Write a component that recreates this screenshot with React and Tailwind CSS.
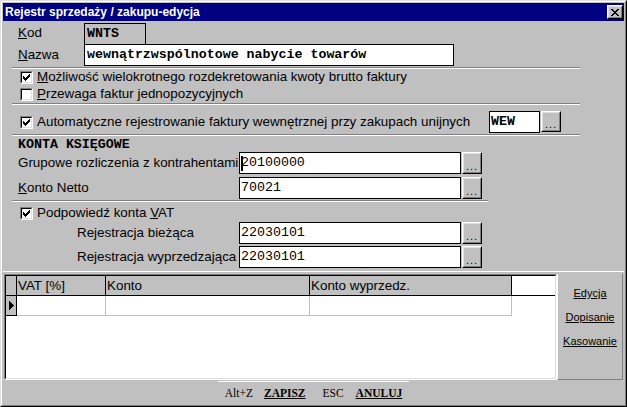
import React from 'react'

function Check({ on }) {
  const px = [[6,0],[5,1],[6,1],[0,2],[4,2],[5,2],[6,2],[0,3],[1,3],[3,3],[4,3],[5,3],[0,4],[1,4],[2,4],[3,4],[4,4],[1,5],[2,5],[3,5],[2,6]]
  return (
    <span className="w-[13px] h-[13px] shrink-0 border border-t-[#808080] border-l-[#808080] border-r-white border-b-white">
      <span className="flex items-center justify-center w-full h-full bg-white border border-t-black border-l-black border-r-[#dfdfdf] border-b-[#dfdfdf]">
        {on && (
          <svg width="7" height="7" viewBox="0 0 7 7" shapeRendering="crispEdges">
            {px.map(([x, y], i) => <rect key={i} x={x} y={y} width="1" height="1" fill="#000" />)}
          </svg>
        )}
      </span>
    </span>
  )
}

function Dots({ h = 'h-[21px]' }) {
  return (
    <div className={`w-[20px] ${h} ml-px shrink-0 bg-[#c0c0c0] border border-t-white border-l-white border-r-black border-b-black`}>
      <div className="w-full h-full border border-t-[#dfdfdf] border-l-[#dfdfdf] border-r-[#808080] border-b-[#808080] flex items-end justify-center pb-[3px]">
        <span className="text-[11px] leading-[6px] tracking-[1px]">...</span>
      </div>
    </div>
  )
}

function Sep({ cls }) {
  return <div className={`h-[2px] border-t border-t-[#808080] border-b border-b-white ${cls}`} />
}

function FieldRow({ label, value, labelCls = 'pl-[15px] w-[236px]', caret }) {
  return (
    <div className="flex items-center h-[22px]">
      <span className={`shrink-0 ${labelCls} whitespace-nowrap`}>{label}</span>
      <div className="w-[222px] h-[22px] bg-white border border-black flex items-center pl-px font-['Liberation_Mono','Courier_New',monospace] text-[13.3px]">
        {caret && <span className="w-[2px] h-[15px] bg-black -mr-[2px]" />}
        {value}
      </div>
      <Dots h="h-[22px]" />
    </div>
  )
}

export default function App() {
  return (
    <div className="w-[627px] h-[407px] bg-[#c0c0c0] border border-t-[#dfdfdf] border-l-[#dfdfdf] border-r-black border-b-black font-['Liberation_Sans',Arial,sans-serif] text-[13.4px] text-black overflow-hidden">
      <div className="h-full border border-t-white border-l-white border-r-[#808080] border-b-[#808080] p-px flex flex-col">
        <div className="h-[18px] bg-[#000080] flex items-center justify-between pl-[2px] pr-[1px] shrink-0">
          <span className="text-white font-bold text-[12px] whitespace-nowrap">Rejestr sprzedaży / zakupu-edycja</span>
          <div className="w-[16px] h-[14px] bg-[#c0c0c0] border border-t-white border-l-white border-r-black border-b-black">
            <div className="w-full h-full border border-t-[#dfdfdf] border-l-[#dfdfdf] border-r-[#808080] border-b-[#808080] flex items-center justify-center">
              <svg width="8" height="7" viewBox="0 0 8 7" shapeRendering="crispEdges">
                <path d="M0 0h2v1h-2zM6 0h2v1h-2zM1 1h2v1h-2zM5 1h2v1h-2zM2 2h4v1h-4zM3 3h2v1h-2zM2 4h4v1h-4zM1 5h2v1h-2zM5 5h2v1h-2zM0 6h2v1h-2zM6 6h2v1h-2z" fill="#000" />
              </svg>
            </div>
          </div>
        </div>

        <div className="flex items-center mt-[2px] h-[21px] pl-[15px]">
          <span className="w-[66px]"><u>K</u>od</span>
          <div className="w-[62px] h-[21px] border border-black border-b-0 flex items-center pl-[2px] font-['Liberation_Mono','Courier_New',monospace] font-bold text-[13.3px]">WNTS</div>
        </div>
        <div className="flex items-center h-[22px] pl-[15px]">
          <span className="w-[66px]"><u>N</u>azwa</span>
          <div className="w-[370px] h-[22px] bg-white border border-black flex items-center pl-[2px] font-['Liberation_Mono','Courier_New',monospace] font-bold text-[13.3px] whitespace-nowrap">wewnątrzwspólnotowe nabycie towarów</div>
        </div>
        <Sep cls="mt-[1px] ml-[9px] w-[568px]" />

        <div className="flex items-center gap-[4px] mt-[1px] h-[14px] pl-[17px]">
          <Check on />
          <span className="whitespace-nowrap"><u>M</u>ożliwość wielokrotnego rozdekretowania kwoty brutto faktury</span>
        </div>
        <div className="flex items-center gap-[4px] mt-[3px] h-[14px] pl-[17px]">
          <Check />
          <span className="whitespace-nowrap"><u>P</u>rzewaga faktur jednopozycyjnych</span>
        </div>
        <Sep cls="mt-[2px] ml-[9px] w-[568px]" />

        <div className="flex items-start mt-[6px] h-[22px] pl-[17px]">
          <div className="flex items-center gap-[4px] h-[22px] w-[469px]">
            <Check on />
            <span className="whitespace-nowrap">Automatyczne rejestrowanie faktury wewnętrznej przy zakupach unijnych</span>
          </div>
          <div className="w-[51px] h-[22px] bg-white border border-black flex items-center pl-px font-['Liberation_Mono','Courier_New',monospace] font-bold text-[13.3px]">WEW</div>
          <Dots />
        </div>
        <Sep cls="mt-[1px] ml-[9px] w-[568px]" />

        <div className="mt-[2px] h-[14px] pl-[15px] flex items-center font-['Liberation_Mono','Courier_New',monospace] font-bold text-[13.3px]">KONTA KSIĘGOWE</div>
        <FieldRow label="Grupowe rozliczenia z kontrahentami" value="20100000" caret />
        <div className="mt-[3px]">
          <FieldRow label={<><u>K</u>onto Netto</>} value="70021" />
        </div>
        <Sep cls="mt-[1px] ml-[9px] w-[476px]" />

        <div className="flex items-center gap-[4px] mt-[4px] h-[14px] pl-[17px]">
          <Check on />
          <span className="whitespace-nowrap">Podpowiedź konta <u>V</u>AT</span>
        </div>
        <div className="mt-[2px]">
          <FieldRow label="Rejestracja bieżąca" value="22030101" labelCls="pl-[74px] w-[236px]" />
        </div>
        <div className="mt-[2px]">
          <FieldRow label="Rejestracja wyprzedzająca" value="22030101" labelCls="pl-[74px] w-[236px]" />
        </div>

        <div className="mt-[3px] border-t border-t-white flex pt-[2px] pl-px">
          <div className="w-[553px] h-[106px] border border-t-[#808080] border-l-[#808080] border-r-white border-b-white">
            <div className="w-full h-full bg-white border border-t-black border-l-black border-r-[#dfdfdf] border-b-[#dfdfdf]">
              <div className="flex h-[20px] border-b border-b-black">
                <div className="w-[11px] bg-[#c0c0c0] border-r border-r-black" />
                <div className="w-[89px] bg-[#c0c0c0] border-r border-r-black pl-px leading-[19px]">VAT [%]</div>
                <div className="w-[204px] bg-[#c0c0c0] border-r border-r-black pl-px leading-[19px]">Konto</div>
                <div className="w-[202px] bg-[#c0c0c0] border-r border-r-black pl-px leading-[19px]">Konto wyprzedz.</div>
              </div>
              <div className="flex h-[20px]">
                <div className="w-[11px] bg-[#c0c0c0] border-r border-r-black border-b border-b-black flex items-center justify-center">
                  <svg width="5" height="9" viewBox="0 0 5 9" shapeRendering="crispEdges"><path d="M0 0L5 4.5L0 9Z" fill="#000" /></svg>
                </div>
                <div className="w-[89px] border-r border-b border-[#c0c0c0]" />
                <div className="w-[204px] border-r border-b border-[#c0c0c0]" />
                <div className="w-[202px] border-r border-b border-[#c0c0c0]" />
              </div>
            </div>
          </div>
          <div className="w-[66px] h-[106px] border-l border-l-white border-r border-r-[#808080] border-b border-b-[#808080] flex flex-col items-center pt-[12px] gap-[10px] leading-[14px] text-[11px]">
            <span className="underline">Edycja</span>
            <span className="underline">Dopisanie</span>
            <span className="underline">Kasowanie</span>
          </div>
        </div>

        <div className="mt-px mx-auto w-[191px] border-t border-t-white" />
        <div className="flex justify-center items-center h-[20px] pt-[4px] font-['Liberation_Serif','Times_New_Roman',serif] text-[11.5px] whitespace-nowrap">
          <span>Alt+Z</span>
          <span className="ml-[11px] font-bold underline">ZAPISZ</span>
          <span className="ml-[17px]">ESC</span>
          <span className="ml-[12px] font-bold underline">ANULUJ</span>
        </div>
      </div>
    </div>
  )
}
